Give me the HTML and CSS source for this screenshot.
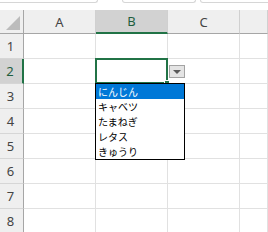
FILE: index.html
```html
<!DOCTYPE html>
<html lang="ja">
<head>
    <meta charset="UTF-8">
    <title>Sheet</title>
    <link rel="stylesheet" href="styles.css">
</head>
<body>
    <div class="topbar">
        <span class="tb tb-left"></span>
        <span class="tb-gap"></span>
        <span class="tb tb-mid"></span>
        <span class="tb-gap small"></span>
        <span class="tb tb-right"></span>
    </div>
    <div class="sheet">
        <div class="hd corner"><span class="tri"></span></div>
        <div class="hd col">A</div>
        <div class="hd col sel-col">B</div>
        <div class="hd col">C</div>
        <div class="hd col"></div>

        <div class="hd row">1</div>
        <div class="cell"></div><div class="cell"></div><div class="cell"></div><div class="cell"></div>

        <div class="hd row sel-row">2</div>
        <div class="cell"></div>
        <div class="cell active">
            <span class="handle"></span>
            <span class="dd-btn"><span class="arrow"></span></span>
            <ul class="dd-list">
                <li class="picked">にんじん</li>
                <li>キャベツ</li>
                <li>たまねぎ</li>
                <li>レタス</li>
                <li>きゅうり</li>
            </ul>
        </div>
        <div class="cell"></div><div class="cell"></div>

        <div class="hd row">3</div>
        <div class="cell"></div><div class="cell"></div><div class="cell"></div><div class="cell"></div>
        <div class="hd row">4</div>
        <div class="cell"></div><div class="cell"></div><div class="cell"></div><div class="cell"></div>
        <div class="hd row">5</div>
        <div class="cell"></div><div class="cell"></div><div class="cell"></div><div class="cell"></div>
        <div class="hd row">6</div>
        <div class="cell"></div><div class="cell"></div><div class="cell"></div><div class="cell"></div>
        <div class="hd row">7</div>
        <div class="cell"></div><div class="cell"></div><div class="cell"></div><div class="cell"></div>
        <div class="hd row">8</div>
        <div class="cell"></div><div class="cell"></div><div class="cell"></div><div class="cell"></div>
    </div>
</body>
</html>
```
FILE: styles.css
```css
body {
    margin: 0;
    background: #ffffff;
    font-family: "Noto Sans", "Open Sans", sans-serif;
    overflow: hidden;
}

.topbar {
    display: flex;
    height: 10px;
    background: #ffffff;
}

.tb {
    height: 2px;
    border: 1px solid #d6d6d6;
    border-top: none;
    border-radius: 0 0 4px 4px;
}

.tb-left {
    width: 100px;
    margin-left: -4px;
}

.tb-gap {
    width: 24px;
}

.tb-gap.small {
    width: 4px;
}

.tb-mid {
    width: 72px;
}

.tb-right {
    flex: 1;
    margin-right: -4px;
}

.sheet {
    display: grid;
    grid-template-columns: 24px 72px 72px 72px 28px;
    grid-template-rows: 24px;
    grid-auto-rows: 25px;
}

.cell {
    border-right: 1px solid #e1e1e1;
    border-bottom: 1px solid #e1e1e1;
}

.hd {
    background: #efefef;
    color: #444444;
    font-size: 13px;
    display: flex;
    align-items: center;
    justify-content: center;
}

.col {
    border-right: 1px solid #d0d0d0;
    border-bottom: 1px solid #a6a6a6;
}

.row {
    border-right: 1px solid #a6a6a6;
    border-bottom: 1px solid #d6d6d6;
    padding-right: 2px;
}

.corner {
    position: relative;
    border-right: 1px solid #a6a6a6;
    border-bottom: 1px solid #a6a6a6;
}

.tri {
    position: absolute;
    right: 3px;
    bottom: 3px;
    width: 0;
    height: 0;
    border-left: 14px solid transparent;
    border-bottom: 14px solid #bcbcbc;
}

.sel-col {
    background: #d2d2d2;
    color: #1f5e3e;
    border-bottom: 2px solid #217346;
}

.sel-row {
    background: #d2d2d2;
    color: #1f5e3e;
    border-right: 2px solid #217346;
}

.active {
    position: relative;
}

.active::before {
    content: "";
    position: absolute;
    top: -1px;
    left: -1px;
    right: -1px;
    bottom: -1px;
    border: 2px solid #217346;
}

.handle {
    position: absolute;
    right: -3px;
    bottom: -3px;
    width: 4px;
    height: 4px;
    background: #217346;
    border: 1px solid #ffffff;
    z-index: 2;
}

.dd-btn {
    position: absolute;
    left: calc(100% + 2px);
    top: 6px;
    width: 14px;
    height: 11px;
    background: #e4e4e4;
    border: 1px solid #a3a3a3;
    display: flex;
    align-items: center;
    justify-content: center;
}

.arrow {
    width: 0;
    height: 0;
    border-left: 4px solid transparent;
    border-right: 4px solid transparent;
    border-top: 4px solid #5a5a5a;
}

.dd-list {
    position: absolute;
    top: 24px;
    left: -1px;
    width: 88px;
    margin: 0;
    padding: 0;
    list-style: none;
    background: #ffffff;
    border: 1px solid #000000;
    z-index: 3;
    font-family: "Noto Sans CJK JP", sans-serif;
    font-size: 10px;
    color: #000000;
}

.dd-list li {
    height: 15px;
    line-height: 15px;
    padding-left: 2px;
    overflow: hidden;
}

.dd-list .picked {
    background: #0078d7;
    color: #ffffff;
}

.dd-list span {
    display: inline-block;
}
```
